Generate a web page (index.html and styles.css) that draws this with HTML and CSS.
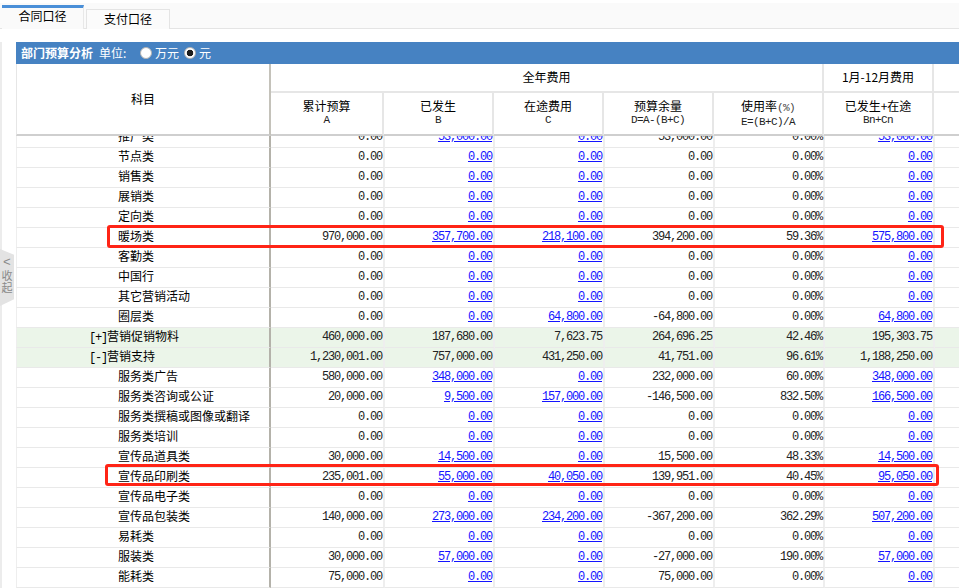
FILE: index.html
```html
<!DOCTYPE html>
<html lang="zh-CN">
<head>
<meta charset="utf-8">
<title>部门预算分析</title>
<link rel="stylesheet" href="styles.css">
</head>
<body>
<div class="page">
  <nav class="tabs">
    <a class="tab tab-active">合同口径</a>
    <a class="tab">支付口径</a>
  </nav>
  <section class="panel">
    <div class="bar">
      <strong class="bar-title">部门预算分析</strong>
      <span class="bar-unit">单位:</span>
      <label class="opt"><input type="radio" name="unit" class="radio">万元</label>
      <label class="opt"><input type="radio" name="unit" class="radio" checked>元</label>
    </div>
    <table class="grid head">
      <colgroup><col class="c0"><col class="ch1"><col class="cn"><col class="cn"><col class="cn"><col class="cn"><col class="cn"><col></colgroup>
      <tr class="hr1">
        <th rowspan="2" class="hsub">科目</th>
        <th colspan="5" class="nob">全年费用</th>
        <th>1月-12月费用</th>
        <th class="end"></th>
      </tr>
      <tr class="hr2">
        <th>累计预算<span class="sub">A</span></th>
        <th>已发生<span class="sub">B</span></th>
        <th>在途费用<span class="sub">C</span></th>
        <th>预算余量<span class="sub">D=A-(B+C)</span></th>
        <th>使用率<span class="pct">(%)</span><span class="sub">E=(B+C)/A</span></th>
        <th>已发生+在途<span class="sub">Bn+Cn</span></th>
        <th class="end"></th>
      </tr>
    </table>
    <div class="scroll">
      <table class="grid body">
        <colgroup><col class="c0"><col class="c1"><col class="cn"><col class="cn"><col class="cn"><col class="cn"><col class="cn"><col></colgroup>
        <tr><td class="l">推广类</td><td>0.00</td><td><a>53,000.00</a></td><td><a>0.00</a></td><td>53,000.00</td><td>0.00%</td><td><a>53,000.00</a></td><td></td></tr>
        <tr><td class="l">节点类</td><td>0.00</td><td><a>0.00</a></td><td><a>0.00</a></td><td>0.00</td><td>0.00%</td><td><a>0.00</a></td><td></td></tr>
        <tr><td class="l">销售类</td><td>0.00</td><td><a>0.00</a></td><td><a>0.00</a></td><td>0.00</td><td>0.00%</td><td><a>0.00</a></td><td></td></tr>
        <tr><td class="l">展销类</td><td>0.00</td><td><a>0.00</a></td><td><a>0.00</a></td><td>0.00</td><td>0.00%</td><td><a>0.00</a></td><td></td></tr>
        <tr><td class="l">定向类</td><td>0.00</td><td><a>0.00</a></td><td><a>0.00</a></td><td>0.00</td><td>0.00%</td><td><a>0.00</a></td><td></td></tr>
        <tr><td class="l">暖场类</td><td>970,000.00</td><td><a>357,700.00</a></td><td><a>218,100.00</a></td><td>394,200.00</td><td>59.36%</td><td><a>575,800.00</a></td><td></td></tr>
        <tr><td class="l">客勤类</td><td>0.00</td><td><a>0.00</a></td><td><a>0.00</a></td><td>0.00</td><td>0.00%</td><td><a>0.00</a></td><td></td></tr>
        <tr><td class="l">中国行</td><td>0.00</td><td><a>0.00</a></td><td><a>0.00</a></td><td>0.00</td><td>0.00%</td><td><a>0.00</a></td><td></td></tr>
        <tr><td class="l">其它营销活动</td><td>0.00</td><td><a>0.00</a></td><td><a>0.00</a></td><td>0.00</td><td>0.00%</td><td><a>0.00</a></td><td></td></tr>
        <tr><td class="l">圈层类</td><td>0.00</td><td><a>0.00</a></td><td><a>64,800.00</a></td><td>-64,800.00</td><td>0.00%</td><td><a>64,800.00</a></td><td></td></tr>
        <tr class="group"><td class="g"><span class="tog">[+]</span>营销促销物料</td><td>460,000.00</td><td>187,680.00</td><td>7,623.75</td><td>264,696.25</td><td>42.46%</td><td>195,303.75</td><td></td></tr>
        <tr class="group"><td class="g"><span class="tog">[-]</span>营销支持</td><td>1,230,001.00</td><td>757,000.00</td><td>431,250.00</td><td>41,751.00</td><td>96.61%</td><td>1,188,250.00</td><td></td></tr>
        <tr><td class="l">服务类广告</td><td>580,000.00</td><td><a>348,000.00</a></td><td><a>0.00</a></td><td>232,000.00</td><td>60.00%</td><td><a>348,000.00</a></td><td></td></tr>
        <tr><td class="l">服务类咨询或公证</td><td>20,000.00</td><td><a>9,500.00</a></td><td><a>157,000.00</a></td><td>-146,500.00</td><td>832.50%</td><td><a>166,500.00</a></td><td></td></tr>
        <tr><td class="l">服务类撰稿或图像或翻译</td><td>0.00</td><td><a>0.00</a></td><td><a>0.00</a></td><td>0.00</td><td>0.00%</td><td><a>0.00</a></td><td></td></tr>
        <tr><td class="l">服务类培训</td><td>0.00</td><td><a>0.00</a></td><td><a>0.00</a></td><td>0.00</td><td>0.00%</td><td><a>0.00</a></td><td></td></tr>
        <tr><td class="l">宣传品道具类</td><td>30,000.00</td><td><a>14,500.00</a></td><td><a>0.00</a></td><td>15,500.00</td><td>48.33%</td><td><a>14,500.00</a></td><td></td></tr>
        <tr><td class="l">宣传品印刷类</td><td>235,001.00</td><td><a>55,000.00</a></td><td><a>40,050.00</a></td><td>139,951.00</td><td>40.45%</td><td><a>95,050.00</a></td><td></td></tr>
        <tr><td class="l">宣传品电子类</td><td>0.00</td><td><a>0.00</a></td><td><a>0.00</a></td><td>0.00</td><td>0.00%</td><td><a>0.00</a></td><td></td></tr>
        <tr><td class="l">宣传品包装类</td><td>140,000.00</td><td><a>273,000.00</a></td><td><a>234,200.00</a></td><td>-367,200.00</td><td>362.29%</td><td><a>507,200.00</a></td><td></td></tr>
        <tr><td class="l">易耗类</td><td>0.00</td><td><a>0.00</a></td><td><a>0.00</a></td><td>0.00</td><td>0.00%</td><td><a>0.00</a></td><td></td></tr>
        <tr><td class="l">服装类</td><td>30,000.00</td><td><a>57,000.00</a></td><td><a>0.00</a></td><td>-27,000.00</td><td>190.00%</td><td><a>57,000.00</a></td><td></td></tr>
        <tr><td class="l">能耗类</td><td>75,000.00</td><td><a>0.00</a></td><td><a>0.00</a></td><td>75,000.00</td><td>0.00%</td><td><a>0.00</a></td><td></td></tr>
      </table>
    </div>
  </section>
  <div class="mark mark-a"></div>
  <div class="mark mark-b"></div>
  <div class="collapse"><span class="chev">&lt;</span><span>收</span><span>起</span></div>
</div>
</body>
</html>
```

FILE: styles.css
```css
* { box-sizing: border-box; }
html, body { margin: 0; height: 100%; background: #fff; overflow: hidden; }
body {
  font: 12px/16px "Noto Sans CJK SC", "Liberation Sans", sans-serif;
  color: #000;
}
.page {
  position: relative;
  height: 588px;
  padding-top: 3px;
  display: flex;
  flex-direction: column;
}
.tabs {
  display: flex;
  align-items: flex-end;
  gap: 2px;
  height: 26px;
  padding-left: 2px;
  background: #fafafa;
  border-bottom: 1px solid #e4e4e4;
  flex: none;
}
.tab {
  width: 84px;
  height: 20px;
  margin-bottom: -1px;
  border: 1px solid #e4e4e4;
  border-bottom: 0;
  text-align: center;
  line-height: 17px;
  background: #fbfbfb;
}
.tab-active {
  width: 82px;
  height: 24px;
  border: 0;
  border-top: 3px solid #4a8fd8;
  line-height: 15px;
  background: #fafafa;
  border-right: 1px solid #e8e8e8;
}
.panel {
  flex: 1;
  min-height: 0;
  margin-top: 13px;
  padding-left: 14px;
  border-left: 2px solid #ececec;
  display: flex;
  flex-direction: column;
}
.bar {
  flex: none;
  height: 22px;
  padding-left: 5px;
  display: flex;
  align-items: center;
  background: #4682c2;
  color: #fff;
  line-height: 22px;
}
.bar-title { font-weight: 700; width: 78px; }
.bar-unit { width: 41px; }
.opt { display: flex; align-items: center; gap: 3px; margin-right: 5px; }
.radio {
  appearance: none;
  -webkit-appearance: none;
  margin: 0;
  width: 12px;
  height: 12px;
  border-radius: 50%;
  background: #fff;
  border: 1px solid #b4b4b4;
}
.radio:checked { background: radial-gradient(circle, #1c1c1c 0 3px, #fff 3.6px); }
.grid {
  table-layout: fixed;
  width: 943px;
  border-collapse: separate;
  border-spacing: 0;
}
.c0 { width: 255px; }
.ch1 { width: 113px; }
.c1 { width: 114px; }
.cn { width: 110px; }
.head { flex: none; height: 72px; }
.head th {
  font-weight: 400;
  text-align: center;
  padding: 0;
  border-right: 2px solid #e6e6e6;
  border-bottom: 2px solid #e6e6e6;
}
.hr1 { height: 29px; }
.hr2 { height: 43px; }
.hr1 th { padding-bottom: 2px; }
.hr2 th { border-bottom: 2px solid #cfcfcf; vertical-align: top; padding-top: 6px; line-height: 13px; }
.head th.hsub {
  border-left: 1px solid #e6e6e6;
  border-right: 2px solid #c4c2ba;
  border-bottom: 2px solid #cfcfcf;
  padding: 0;
  vertical-align: middle;
}
.head .end { border-right: 0; }
.sub, .pct {
  font: 11px/12px "Liberation Mono", monospace;
  letter-spacing: -0.6px;
  color: #222;
}
.sub { display: block; margin-top: 2px; }
.pct { color: #444; }
.scroll { flex: 1; min-height: 0; overflow: hidden; }
.body { margin-top: -8px; }
.body tr { height: 20px; }
.body td {
  height: 20px;
  padding: 0 1px 1px 0;
  text-align: right;
  vertical-align: middle;
  border-right: 2px solid #eeeeee;
  border-bottom: 1px solid #e9e9e9;
  font: 12px/16px "Liberation Mono", monospace;
  letter-spacing: -1.2px;
  white-space: nowrap;
  color: #222;
}
.body td:last-child { border-right: 0; }
.body td.l, .body td.g {
  padding: 0 0 3px;
  text-align: left;
  font: 12px/16px "Noto Sans CJK SC", sans-serif;
  letter-spacing: 0;
  color: #000;
  border-left: 1px solid #eeeeee;
  border-right: 2px solid #b4b2aa;
}
.body td.l { padding-left: 101px; }
.body td.g { padding-left: 72px; }
.tog { font: 12px/10px "Liberation Mono", monospace; letter-spacing: -1.2px; }
.group td { background: #ebf5e9; }
.body a { color: #1414ff; text-decoration: underline; }
.mark {
  position: absolute;
  border: 3px solid #ff2416;
  border-radius: 3px;
  pointer-events: none;
}
.mark-a { left: 107px; top: 225px; width: 837px; height: 23px; }
.mark-b { left: 105px; top: 464px; width: 834px; height: 22px; }
.collapse {
  position: absolute;
  left: 0;
  top: 249px;
  width: 14px;
  height: 57px;
  padding-top: 8px;
  background: #e3e3e3;
  color: #8a8a8a;
  clip-path: polygon(0 0, 100% 10%, 100% 88%, 0 100%);
  font: 11px/12px "Noto Sans CJK SC", sans-serif;
  text-align: center;
}
.collapse span { display: block; }
.collapse .chev { font: 13px/12px "Liberation Mono", monospace; }
```
